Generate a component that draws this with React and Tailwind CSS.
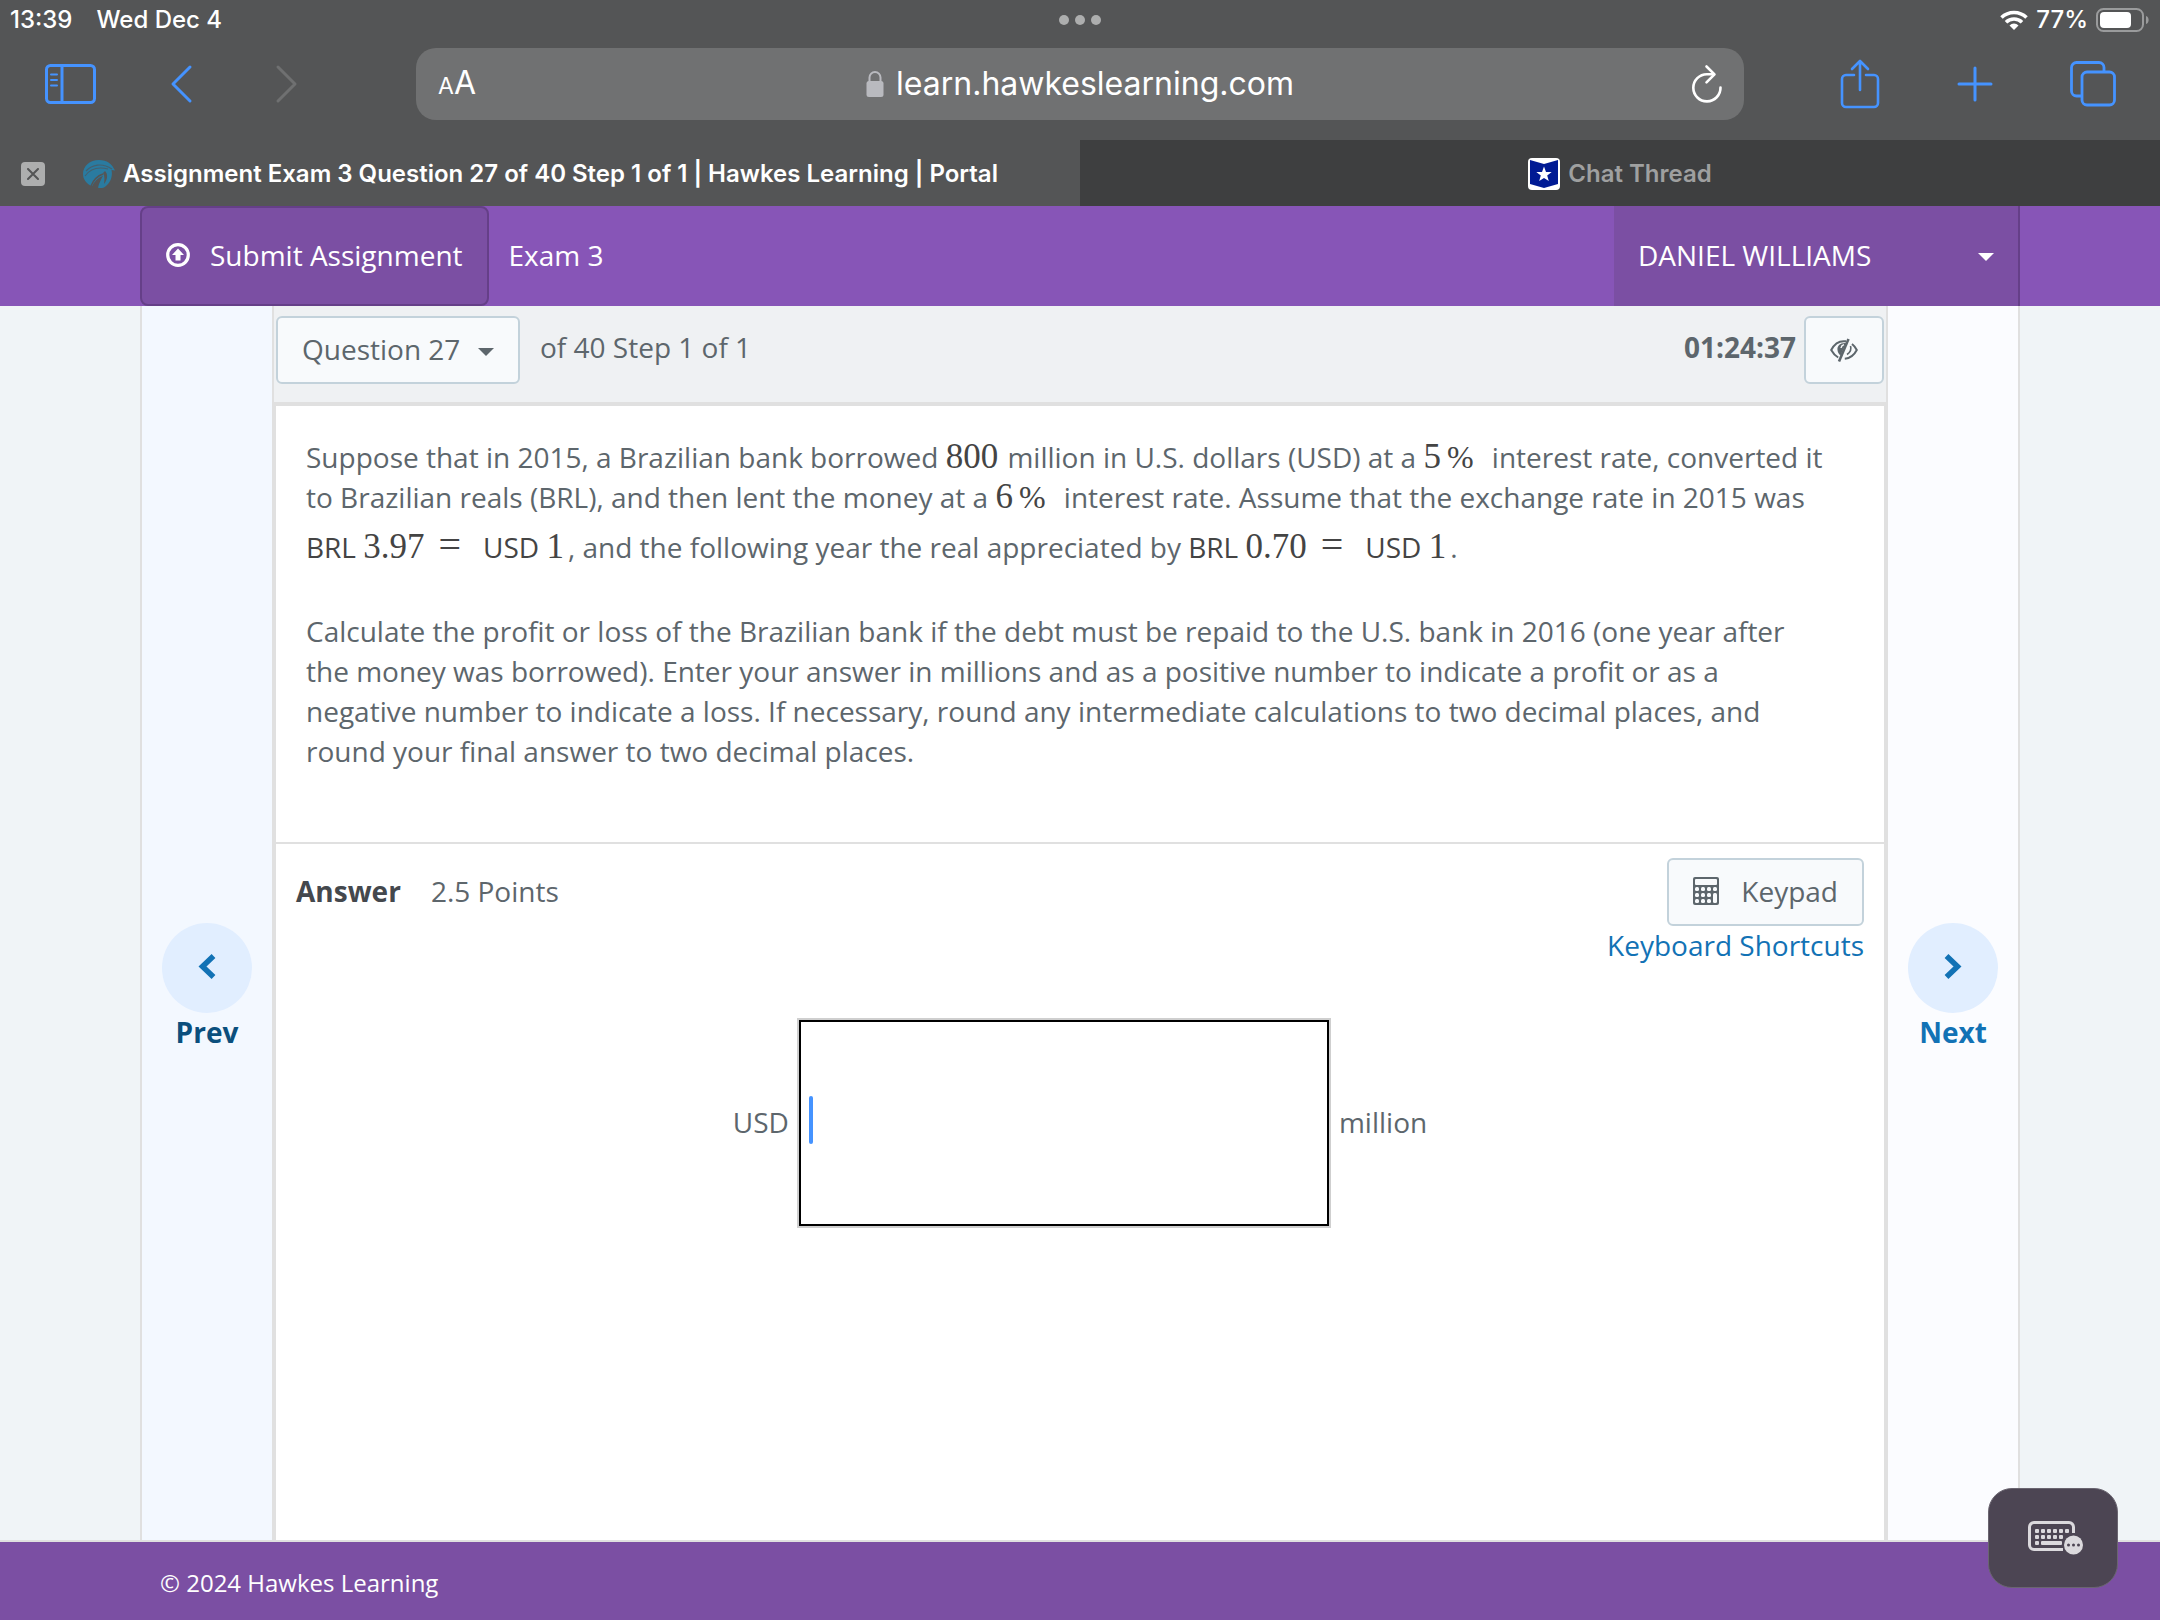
import React, { useState } from 'react';

const SidebarIcon = () => (
  <svg className="w-[52px] h-10" viewBox="0 0 52 40" fill="none" stroke="currentColor">
    <rect x="2.500" y="1.500" width="48" height="37" rx="4" strokeWidth="3" />
    <path d="M18 2v36" strokeWidth="3" />
    <path d="M7 10.500h6M7 16h6M7 21.500h6" strokeWidth="2" strokeLinecap="round" />
  </svg>
);

const ChevronIcon = ({ flip }) => (
  <svg className={flip ? 'w-6 h-10 rotate-180' : 'w-6 h-10'} viewBox="0 0 24 40" fill="none" stroke="currentColor" strokeWidth="3" strokeLinecap="round" strokeLinejoin="round">
    <path d="M20 3L3 20l17 17" />
  </svg>
);

const LockIcon = () => (
  <svg className="w-[18px] h-7" viewBox="0 0 18 28">
    <path d="M3.5 13V7.5a5.5 5.5 0 0 1 11 0V13" fill="none" stroke="#b9babf" strokeWidth="2" />
    <rect x="0.5" y="11" width="17" height="16" rx="2.5" fill="#b9babf" />
  </svg>
);

const ReloadIcon = () => (
  <svg className="w-8 h-10" viewBox="0 0 32 40" fill="none" stroke="currentColor" strokeWidth="2.6" strokeLinecap="round" strokeLinejoin="round">
    <path d="M23.500 10.200H17A13.600 13.600 0 1 0 30.500 23.500" />
    <path d="M16.500 2.500l8 7.900-8 7.900" />
  </svg>
);

const ShareIcon = () => (
  <svg className="w-10 h-[50px]" viewBox="0 0 40 50" fill="none" stroke="currentColor" strokeWidth="2.6" strokeLinecap="round" strokeLinejoin="round">
    <path d="M14 16H6a4 4 0 0 0-4 4v24a4 4 0 0 0 4 4h28a4 4 0 0 0 4-4V20a4 4 0 0 0-4-4h-8" />
    <path d="M20 31V2M12 10l8-8 8 8" />
  </svg>
);

const PlusIcon = () => (
  <svg className="w-9 h-9" viewBox="0 0 36 36" fill="none" stroke="currentColor" strokeWidth="3" strokeLinecap="round">
    <path d="M18 2v32M2 18h32" />
  </svg>
);

const TabsIcon = () => (
  <svg className="w-[46px] h-[46px]" viewBox="0 0 46 46" fill="none" stroke="currentColor" strokeWidth="2.8">
    <path d="M12 35H6.500a5 5 0 0 1-5-5V6.500a5 5 0 0 1 5-5H29a5 5 0 0 1 5 5V11" />
    <rect x="12" y="11" width="32.500" height="33" rx="5" />
  </svg>
);

const WifiIcon = () => (
  <svg className="w-7 h-5" viewBox="0 0 28 20" fill="none" stroke="white" strokeWidth="3.6">
    <path d="M1.500 7.500a18 18 0 0 1 25 0" />
    <path d="M6 12.300a11.500 11.500 0 0 1 16 0" />
    <path d="M14 20l-4.500-4.600a6.500 6.500 0 0 1 9 0z" fill="white" stroke="none" />
  </svg>
);

const BatteryIcon = () => (
  <svg className="w-[54px] h-6" viewBox="0 0 54 24">
    <rect x="1" y="1" width="46" height="22" rx="6.500" fill="none" stroke="#9a9b9c" strokeWidth="2" />
    <rect x="4" y="4" width="31" height="16" rx="4" fill="white" />
    <path d="M50 8c3.500 1 3.500 7 0 8z" fill="#9a9b9c" />
  </svg>
);

const HawkIcon = () => (
  <svg className="w-8 h-7" viewBox="0 0 32 28">
    <path d="M16 0c8 0 13 4 16 10.500l-3.500-.5c1.500 7-1.500 14-7.500 17.500-2 .6-4 .6-6 .3 1-5 3-8 5-12-5 2-9 6-11 10.500C3 23.500 0 19 0 14 0 6 7 0 16 0z" fill="#2a7ba0" />
    <path d="M3 11C9 4.500 19 2.500 29 9" fill="none" stroke="#44606f" strokeWidth="1.200" />
    <path d="M2 16C7 9 15 6.500 25 9" fill="none" stroke="#44606f" strokeWidth="1.200" />
    <path d="M22 11c3 3 3 8-1 13 .5-4 1-8-1-11z" fill="#545556" />
    <path d="M20 14c-6 2-10 7-12 12" fill="none" stroke="#545556" strokeWidth="1.500" />
  </svg>
);

const StarIcon = () => (
  <svg className="w-8 h-8" viewBox="0 0 32 32">
    <rect width="32" height="32" rx="4" fill="white" />
    <path d="M2 2l14 4 14-4v24l-14 4-14-4z" fill="#001a94" />
    <path d="M16 8.500l2 5.400 5.700.2-4.500 3.500 1.600 5.500-4.800-3.200-4.800 3.200 1.600-5.500-4.500-3.500 5.700-.2z" fill="white" />
  </svg>
);

const UploadIcon = () => (
  <svg className="w-6 h-6" viewBox="0 0 24 24">
    <circle cx="12" cy="12" r="10.300" fill="none" stroke="currentColor" strokeWidth="3.200" />
    <path d="M12 5.500l6 6.500h-3.500v5.500h-5V12H6z" fill="currentColor" />
  </svg>
);

const Caret = ({ className }) => (
  <svg className={className} viewBox="0 0 16 8">
    <path d="M0 0h16L8 8z" fill="currentColor" />
  </svg>
);

const EyeClosedIcon = () => (
  <svg className="w-7 h-6" viewBox="0 0 28 24" fill="none" stroke="currentColor" strokeWidth="2">
    <path d="M16 3.300C9 2.300 4 6.500 1.200 12c1.800 3.300 4 5.700 7 7.500" />
    <path d="M22 6c2.200 1.700 3.700 3.700 4.800 6-2.600 5-6.600 8.300-12 8.700" />
    <path d="M18.500 1L9 23.500" strokeWidth="2.600" />
    <path d="M16 5C10 4.500 7 8 7.500 12c.2 2.500 1.500 4.500 3 5.500z" fill="currentColor" stroke="none" />
    <path d="M11 10c.3-1.800 1.400-3 3-3.400" stroke="#f8fafc" strokeWidth="1.400" />
    <path d="M20.500 8c1 3 .2 6-3.500 8.500" strokeWidth="1.600" />
  </svg>
);

const CalculatorIcon = () => (
  <svg className="w-[26px] h-7" viewBox="0 0 26 28">
    <rect width="26" height="28" rx="2" fill="currentColor" />
    <g fill="#f8fafc">
      <rect x="2" y="2" width="22" height="6" rx="1" />
      {[10, 16, 22].map(y => [2, 8, 14].map(x => <rect key={`${x}-${y}`} x={x} y={y} width="4" height="4" rx="1.500" />))}
      <rect x="20" y="10" width="4" height="4" rx="1.500" />
      <rect x="20" y="16" width="4" height="10" rx="1.500" />
    </g>
  </svg>
);

const ArrowIcon = ({ flip }) => (
  <svg className="w-[18px] h-[30px]" viewBox="0 0 18 30" fill="none" stroke="currentColor" strokeWidth="5.500" strokeLinejoin="miter">
    <path d={flip ? 'M2.500 3L13.500 13.500l-11 10.500' : 'M15.500 3L4.500 13.500l11 10.500'} />
  </svg>
);

const KeyboardIcon = () => (
  <svg className="w-14 h-[34px]" viewBox="0 0 56 34">
    <path d="M35 28.500H6A4.500 4.500 0 0 1 1.500 24V6A4.500 4.500 0 0 1 6 1.500h35A4.500 4.500 0 0 1 45.500 6v6" fill="none" stroke="#dbd9dd" strokeWidth="3" />
    <g fill="#dbd9dd">
      {[7, 13, 19, 25, 31, 37].map(x => <rect key={x} x={x} y="8" width="4" height="4" rx="1" />)}
      {[7, 13, 19, 25, 31].map(x => <rect key={x} x={x} y="14" width="4" height="4" rx="1" />)}
      <rect x="7" y="20" width="4" height="4" rx="1" />
      <rect x="13" y="20" width="21" height="4" rx="1" />
      <circle cx="45.500" cy="24" r="9.500" />
    </g>
    <g fill="#4c4553">
      <circle cx="40.500" cy="24" r="1.500" />
      <circle cx="45.500" cy="24" r="1.500" />
      <circle cx="50.500" cy="24" r="1.500" />
    </g>
  </svg>
);

const MathNum = ({ children, className = 'leading-[38px]' }) => (
  <span className={`font-['Liberation_Serif',serif] text-[35px] text-[#444444] ${className}`}>{children}</span>
);

const Percent = () => (
  <span className="font-['Liberation_Serif',serif] text-[32px] leading-8 text-[#444444] ml-1.5 mr-[11px]">%</span>
);

const Rate = ({ amount }) => (
  <span className="text-[#444444] whitespace-nowrap">
    BRL <MathNum className="leading-[60px]">{amount}</MathNum>
    <span className="font-['Liberation_Serif',serif] text-[40px] leading-10 mx-3.5">=</span>
    <span className="ml-2">USD</span> <MathNum className="leading-[38px] mr-1">1</MathNum>
  </span>
);

const BrowserChrome = () => (
  <header className="bg-[#545556] text-white font-['Inter',sans-serif]">
    <div className="h-10 px-2.5 grid grid-cols-3 items-center text-[24px] font-medium leading-10">
      <div className="flex gap-6">
        <span>13:39</span>
        <span>Wed Dec 4</span>
      </div>
      <div className="flex justify-center gap-1.5">
        <span className="size-2.5 rounded-full bg-[#adaeae]" />
        <span className="size-2.5 rounded-full bg-[#adaeae]" />
        <span className="size-2.5 rounded-full bg-[#adaeae]" />
      </div>
      <div className="flex items-center justify-end gap-2">
        <WifiIcon />
        <span>77%</span>
        <BatteryIcon />
      </div>
    </div>

    <div className="h-[100px] pt-2 flex items-start text-[#4593ff]">
      <div className="w-[416px] h-18 pl-11 flex items-center">
        <button aria-label="Show sidebar" className="mr-[74px]"><SidebarIcon /></button>
        <button aria-label="Back" className="mr-20"><ChevronIcon /></button>
        <button aria-label="Forward" className="text-[#6f7071]"><ChevronIcon flip /></button>
      </div>
      <div className="flex-1 h-18 px-[22px] rounded-[20px] bg-[#707172] text-white grid grid-cols-[64px_1fr_64px] items-center">
        <button aria-label="Page settings" className="justify-self-start flex items-baseline leading-10">
          <span className="text-[23px]">A</span>
          <span className="text-[32px]">A</span>
        </button>
        <div className="flex items-center justify-center gap-3">
          <LockIcon />
          <span className="text-[32px] leading-10">learn.hawkeslearning.com</span>
        </div>
        <button aria-label="Reload" className="justify-self-end"><ReloadIcon /></button>
      </div>
      <div className="w-[416px] h-18 pl-24 pr-11 flex items-center justify-between">
        <button aria-label="Share"><ShareIcon /></button>
        <button aria-label="New tab"><PlusIcon /></button>
        <button aria-label="Show tabs"><TabsIcon /></button>
      </div>
    </div>

    <div className="h-[66px] grid grid-cols-2 text-[24px] font-semibold leading-8">
      <div className="pl-[21px] pr-5 pt-0.5 grid grid-cols-[26px_1fr_26px] items-center">
        <button aria-label="Close tab" className="size-6 rounded bg-[#adaeae] text-[#545556] flex items-center justify-center">
          <svg className="size-3" viewBox="0 0 12 12" stroke="currentColor" strokeWidth="2" strokeLinecap="round"><path d="M1 1l10 10M11 1L1 11" /></svg>
        </button>
        <div className="flex items-center justify-center gap-2 whitespace-nowrap">
          <HawkIcon />
          <span>Assignment Exam 3 Question 27 of 40 Step 1 of 1 | Hawkes Learning | Portal</span>
        </div>
      </div>
      <div className="pt-0.5 bg-[#3e3f40] text-[#9fa0a0] flex items-center justify-center gap-2">
        <StarIcon />
        <span>Chat Thread</span>
      </div>
    </div>
  </header>
);

const NavColumn = ({ label, next, className }) => (
  <div className={`w-[130px] shrink-0 grid grid-rows-2 ${className}`}>
    <button className="row-start-2 justify-self-center self-start flex flex-col items-center font-bold leading-[38px]">
      <span className="size-[90px] rounded-full bg-[#e1eeff] text-[#1272b5] flex items-center justify-center">
        <ArrowIcon flip={next} />
      </span>
      <span>{label}</span>
    </button>
  </div>
);

export default function App() {
  const [question, setQuestion] = useState('27');
  const [answer, setAnswer] = useState('');

  return (
    <div className="min-h-screen flex flex-col bg-[#f0f4f7] text-[#5d666c] text-[28px] leading-10 font-['Open_Sans',sans-serif]">
      <BrowserChrome />

      <nav className="h-[100px] shrink-0 bg-[#8755b7] text-white">
        <div className="h-full max-w-[1880px] mx-auto flex items-center">
          <button className="h-full px-6 pb-0.5 rounded-lg border-2 border-[#653f88] bg-[#7b4fa3] flex items-center gap-5">
            <UploadIcon />
            Submit Assignment
          </button>
          <span className="ml-5 pb-0.5 flex-1">Exam 3</span>
          <button aria-haspopup="menu" className="h-full w-[406px] px-6 pb-0.5 border-r-2 border-[#653f88] bg-[#7b4fa3] flex items-center justify-between">
            DANIEL WILLIAMS
            <Caret className="w-4 h-2 mt-1" />
          </button>
        </div>
      </nav>

      <main className="flex-1 w-full max-w-[1880px] mx-auto flex border-x-2 border-[#e0e0e0]">
        <NavColumn label="Prev" className="bg-[#f3f8ff] text-[#0b4f7d]" />

        <div className="flex-1 flex flex-col border-x-2 border-[#e0e0e0]">
          <div className="h-24 shrink-0 px-0.5 pt-2.5 bg-[#eff1f3] flex items-start">
            <div className="relative">
              <select
                aria-label="Question"
                value={question}
                onChange={(e) => setQuestion(e.target.value)}
                className="w-[244px] h-[68px] pl-6 pb-0.5 appearance-none rounded-md border-2 border-[#c3d2db] bg-[#f8fafc]"
              >
                <option value="26">Question 26</option>
                <option value="27">Question 27</option>
                <option value="28">Question 28</option>
              </select>
              <Caret className="w-4 h-2 absolute right-[26px] top-8 pointer-events-none" />
            </div>
            <span className="ml-5 pt-[11px]">of 40 Step 1 of 1</span>
            <span className="ml-auto pt-[11px] font-bold">01:24:37</span>
            <button aria-label="Hide timer" className="ml-2 w-20 h-[68px] rounded-md border-2 border-[#c3d2db] bg-[#f8fafc] flex items-center justify-center">
              <EyeClosedIcon />
            </button>
          </div>

          <div className="flex-1 border-t-4 border-x-2 border-[#e0e0e0] bg-white">
            <section className="min-h-[438px] pl-[30px] pr-[54px] pt-[31px] border-b-2 border-[#e0e0e0]">
              <p>
                Suppose that in 2015, a Brazilian bank borrowed <MathNum>800</MathNum>{' '}
                <span className="ml-0.5">million in U.S. dollars (USD) at a</span> <MathNum>5</MathNum><Percent /> interest rate, converted it
                to Brazilian reals (BRL), and then lent the money at a <MathNum>6</MathNum><Percent /> interest rate. Assume that the exchange rate in 2015 was <Rate amount="3.97" />, and the following year the real appreciated by <Rate amount="0.70" />.
              </p>
              <p className="mt-[34px]">
                Calculate the profit or loss of the Brazilian bank if the debt must be repaid to the U.S. bank in 2016 (one year after the money was borrowed). Enter your answer in millions and as a positive number to indicate a profit or as a negative number to indicate a loss. If necessary, round any intermediate calculations to two decimal places, and round your final answer to two decimal places.
              </p>
            </section>

            <section className="px-5 pt-3.5">
              <div className="flex justify-between items-start">
                <h2 className="pt-[13px] flex gap-[30px]">
                  <span className="font-bold text-[#44484d]">Answer</span>
                  <span>2.5 Points</span>
                </h2>
                <div className="flex flex-col items-end">
                  <button className="h-[68px] px-6 pb-0.5 rounded-md border-2 border-[#c3d2db] bg-[#f8fafc] flex items-center gap-[22px]">
                    <CalculatorIcon />
                    Keypad
                  </button>
                  <a href="#shortcuts" className="text-[#1272b5] leading-[38px]">Keyboard Shortcuts</a>
                </div>
              </div>

              <div className="mt-[54px] flex items-center justify-center gap-2">
                <label htmlFor="answer" className="pb-0.5">USD</label>
                <div className="relative">
                  <input
                    id="answer"
                    type="text"
                    value={answer}
                    onChange={(e) => setAnswer(e.target.value)}
                    className="block w-[534px] h-[210px] px-4 border-2 border-[#cfcfcf] outline-2 -outline-offset-4 outline-black"
                  />
                  {answer === '' && <span className="absolute left-3 top-[78px] w-1 h-12 rounded-full bg-[#4593ff]" />}
                </div>
                <span className="pb-0.5">million</span>
              </div>
            </section>
          </div>
        </div>

        <NavColumn label="Next" next className="bg-[#fbfcff] text-[#1272b5]" />
      </main>

      <footer className="h-20 shrink-0 border-t-2 border-[#e0e0e0] bg-[#7b4fa3] text-white text-[24px]">
        <div className="max-w-[1880px] mx-auto px-5 pt-[21px]">© 2024 Hawkes Learning</div>
      </footer>

      <button aria-label="Keyboard" className="fixed right-[42px] bottom-8 w-[130px] h-[100px] pl-1.5 rounded-3xl border border-[#6a6570] bg-[#4c4553] flex items-center justify-center">
        <KeyboardIcon />
      </button>
    </div>
  );
}
